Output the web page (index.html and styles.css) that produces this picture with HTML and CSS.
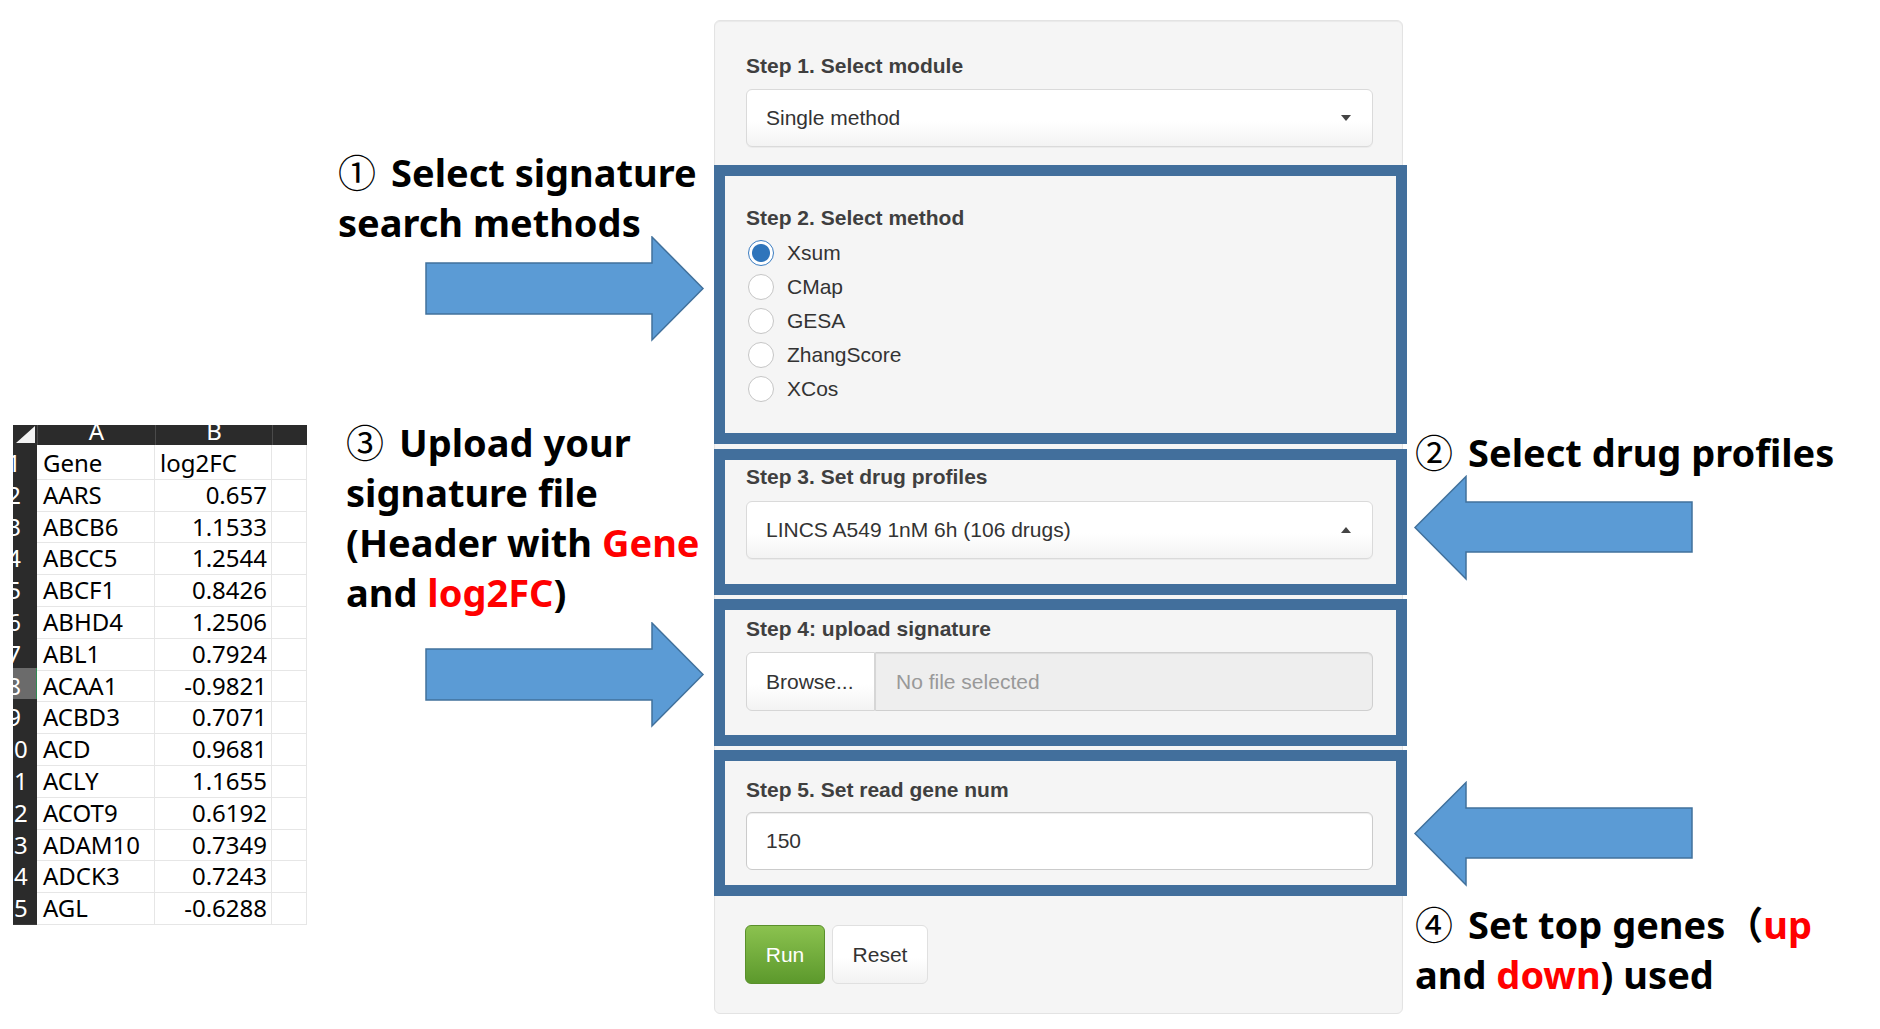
FILE: index.html
```html
<!DOCTYPE html>
<html>
<head>
<meta charset="utf-8">
<title>Signature search workflow</title>
<link rel="stylesheet" href="styles.css">
</head>
<body>
<div class="figure">
  <div class="sheet">
    <div class="sh-head">
      <div class="corner"><span class="tri"></span></div>
      <div class="colh">A</div>
      <div class="colh">B</div>
      <div class="colh"></div>
    </div>
    <div class="row"><div class="rn"><span>1</span></div><div class="c ga">Gene</div><div class="c gb lft">log2FC</div><div class="c gx"></div></div>
    <div class="row"><div class="rn"><span>2</span></div><div class="c ga">AARS</div><div class="c gb">0.657</div><div class="c gx"></div></div>
    <div class="row"><div class="rn"><span>3</span></div><div class="c ga">ABCB6</div><div class="c gb">1.1533</div><div class="c gx"></div></div>
    <div class="row"><div class="rn"><span>4</span></div><div class="c ga">ABCC5</div><div class="c gb">1.2544</div><div class="c gx"></div></div>
    <div class="row"><div class="rn"><span>5</span></div><div class="c ga">ABCF1</div><div class="c gb">0.8426</div><div class="c gx"></div></div>
    <div class="row"><div class="rn"><span>6</span></div><div class="c ga">ABHD4</div><div class="c gb">1.2506</div><div class="c gx"></div></div>
    <div class="row"><div class="rn"><span>7</span></div><div class="c ga">ABL1</div><div class="c gb">0.7924</div><div class="c gx"></div></div>
    <div class="row"><div class="rn sel"><span>8</span></div><div class="c ga">ACAA1</div><div class="c gb">-0.9821</div><div class="c gx"></div></div>
    <div class="row"><div class="rn"><span>9</span></div><div class="c ga">ACBD3</div><div class="c gb">0.7071</div><div class="c gx"></div></div>
    <div class="row"><div class="rn"><span>10</span></div><div class="c ga">ACD</div><div class="c gb">0.9681</div><div class="c gx"></div></div>
    <div class="row"><div class="rn"><span>11</span></div><div class="c ga">ACLY</div><div class="c gb">1.1655</div><div class="c gx"></div></div>
    <div class="row"><div class="rn"><span>12</span></div><div class="c ga">ACOT9</div><div class="c gb">0.6192</div><div class="c gx"></div></div>
    <div class="row"><div class="rn"><span>13</span></div><div class="c ga">ADAM10</div><div class="c gb">0.7349</div><div class="c gx"></div></div>
    <div class="row"><div class="rn"><span>14</span></div><div class="c ga">ADCK3</div><div class="c gb">0.7243</div><div class="c gx"></div></div>
    <div class="row"><div class="rn"><span>15</span></div><div class="c ga">AGL</div><div class="c gb">-0.6288</div><div class="c gx"></div></div>
  </div>

  <div class="notes-left">
    <p class="note n1"><span class="circ">①</span>Select signature<br>search methods</p>
    <svg class="arrow ar1" viewBox="0 0 280 106" width="280" height="106"><path d="M1 27H227V1L278 52.5L227 104V78H1Z"/></svg>
    <p class="note n3"><span class="circ">③</span>Upload your<br>signature file<br>(Header with <span class="red">Gene</span><br>and <span class="red">log2FC</span>)</p>
    <svg class="arrow ar2" viewBox="0 0 280 106" width="280" height="106"><path d="M1 27H227V1L278 52.5L227 104V78H1Z"/></svg>
  </div>

  <div class="panel">
    <div class="sec1">
      <div class="lbl">Step 1. Select module</div>
      <div class="select"><span>Single method</span><i class="caret down"></i></div>
    </div>

    <div class="box b2">
      <div class="lbl">Step 2. Select method</div>
      <div class="radios">
        <div class="radio"><span class="dot on"></span><span>Xsum</span></div>
        <div class="radio"><span class="dot"></span><span>CMap</span></div>
        <div class="radio"><span class="dot"></span><span>GESA</span></div>
        <div class="radio"><span class="dot"></span><span>ZhangScore</span></div>
        <div class="radio"><span class="dot"></span><span>XCos</span></div>
      </div>
    </div>

    <div class="box b3">
      <div class="lbl">Step 3. Set drug profiles</div>
      <div class="select s3"><span>LINCS A549 1nM 6h (106 drugs)</span><i class="caret up"></i></div>
    </div>

    <div class="box b4">
      <div class="lbl">Step 4: upload signature</div>
      <div class="file"><span class="browse">Browse...</span><span class="fname">No file selected</span></div>
    </div>

    <div class="box b5">
      <div class="lbl">Step 5. Set read gene num</div>
      <div class="num">150</div>
    </div>

    <div class="btns">
      <span class="btn run">Run</span>
      <span class="btn reset">Reset</span>
    </div>
  </div>

  <div class="notes-right">
    <p class="note n2"><span class="circ">②</span>Select drug profiles</p>
    <svg class="arrow ar3" viewBox="0 0 281 106" width="281" height="106"><path d="M2 52.5L53 1.5V27H279V77H53V104Z"/></svg>
    <svg class="arrow ar4" viewBox="0 0 281 106" width="281" height="106"><path d="M2 52.5L53 1.5V27H279V77H53V104Z"/></svg>
    <p class="note n4"><span class="circ">④</span>Set top genes<span class="cjk">（</span><span class="red">up</span><br>and <span class="red">down</span>) used</p>
  </div>
</div>
</body>
</html>
```

FILE: styles.css
```css
html, body {
  margin: 0;
  padding: 0;
  background: #ffffff;
}

.figure {
  display: flex;
  align-items: flex-start;
  padding-left: 13px;
  width: 1880px;
  height: 1029px;
  box-sizing: border-box;
  overflow: hidden;
}

/* ---------- spreadsheet ---------- */
.sheet {
  flex: none;
  width: 294px;
  margin-top: 425px;
  font-family: "Noto Sans", "Liberation Sans", sans-serif;
  font-size: 24px;
  color: #000;
}

.sh-head {
  display: grid;
  grid-template-columns: 24px 118px 117px 35px;
  height: 20px;
  background: #2b2b2b;
  color: #fff;
  overflow: hidden;
}

.corner {
  display: flex;
  align-items: flex-end;
  justify-content: flex-end;
  padding: 0 2px 2px 0;
  box-sizing: border-box;
}

.tri {
  width: 19px;
  height: 17px;
  background: #f2f2f2;
  clip-path: polygon(100% 0, 100% 100%, 0 100%);
}

.colh {
  text-align: center;
  line-height: 12px;
  height: 20px;
  border-left: 1px solid #4a4a4a;
  box-sizing: border-box;
}

.row {
  display: grid;
  grid-template-columns: 24px 118px 117px 35px;
  height: 31.8px;
  line-height: 31.8px;
}

.rn {
  background: #2b2b2b;
  color: #fff;
  overflow: hidden;
  border-bottom: 1px solid #3a3a3a;
  box-sizing: border-box;
  padding-top: 2px;
}

.rn span {
  display: block;
  width: 40px;
  margin-left: -19px;
  text-align: center;
}

.rn.sel {
  background: #6b6b6b;
  border-right: 1px solid #2f8a52;
}

.c {
  border-right: 1px solid #e6e6e6;
  border-bottom: 1px solid #e6e6e6;
  box-sizing: border-box;
  white-space: nowrap;
  padding-top: 2px;
}

.ga {
  padding-left: 6px;
}

.gb {
  text-align: right;
  padding-right: 4px;
}

.gb.lft {
  text-align: left;
  padding-left: 5px;
}

/* ---------- annotations ---------- */
.note {
  margin: 0;
  font-family: "Noto Sans", "Noto Sans CJK SC", sans-serif;
  font-weight: 700;
  font-size: 38px;
  line-height: 50px;
  color: #000;
  white-space: nowrap;
}

.circ {
  font-family: "Noto Sans CJK SC", "DejaVu Sans", sans-serif;
  font-weight: 400;
  line-height: 0;
  margin-right: 15px;
}

.cjk {
  font-family: "Noto Sans CJK SC", sans-serif;
  font-weight: 700;
  line-height: 0;
}

.red {
  color: #ff0000;
}

.arrow {
  display: block;
}

.arrow path {
  fill: #5b9bd5;
  stroke: #41719c;
  stroke-width: 1.5;
}

.notes-left {
  flex: none;
  width: 376px;
  margin-left: 31px;
}

.n1 {
  margin-top: 147px;
}

.ar1 {
  margin: -11px 0 0 87px;
}

.n3 {
  margin: 75px 0 0 8px;
}

.ar2 {
  margin: 5px 0 0 87px;
}

.notes-right {
  flex: none;
  margin-left: 12px;
}

.n2 {
  margin-top: 427px;
}

.ar3 {
  margin: -2px 0 0 -2px;
}

.ar4 {
  margin: 200px 0 0 -2px;
}

.n4 {
  margin-top: 12px;
}

/* ---------- shiny panel ---------- */
.panel {
  flex: none;
  width: 689px;
  height: 994px;
  margin-top: 20px;
  box-sizing: border-box;
  padding-top: 30px;
  background: #f5f5f5;
  border: 1px solid #e3e3e3;
  border-radius: 6px;
  box-shadow: inset 0 1px 1px rgba(0, 0, 0, 0.05);
  font-family: "Liberation Sans", Arial, sans-serif;
  font-size: 21px;
  color: #333;
}

.lbl {
  font-weight: 700;
  font-size: 21px;
  line-height: 30px;
  color: #3f3f3f;
}

.sec1 {
  padding: 0 29px 0 31px;
}

.select {
  display: flex;
  align-items: center;
  height: 58px;
  margin-top: 8px;
  padding-left: 19px;
  box-sizing: border-box;
  background: linear-gradient(to bottom, #ffffff 0%, #ffffff 55%, #f3f3f3 100%);
  border: 1px solid #dadada;
  border-radius: 6px;
  box-shadow: 0 1px 0 rgba(0, 0, 0, 0.04);
  color: #333;
}

.s3 {
  margin-top: 9px;
}

.caret {
  margin-left: auto;
  margin-right: 21px;
  width: 0;
  height: 0;
  border-left: 5px solid transparent;
  border-right: 5px solid transparent;
}

.caret.down {
  border-top: 6px solid #444;
}

.caret.up {
  border-bottom: 6px solid #444;
}

.box {
  border: 11px solid #426f9c;
  margin: 0 -5px 0 -1px;
  padding-left: 21px;
  padding-right: 23px;
}

.b2 {
  margin-top: 18px;
  padding-top: 27px;
  padding-bottom: 27px;
}

.b3 {
  margin-top: 5px;
  padding-top: 2px;
  padding-bottom: 25px;
}

.b4 {
  margin-top: 4px;
  padding-top: 4px;
  padding-bottom: 24px;
}

.b5 {
  margin-top: 4px;
  padding-top: 14px;
  padding-bottom: 15px;
}

.radios {
  margin-top: 3px;
}

.radio {
  display: flex;
  align-items: center;
  height: 34px;
  line-height: 30px;
  color: #333;
}

.dot {
  flex: none;
  width: 26px;
  height: 26px;
  box-sizing: border-box;
  margin: 0 13px 0 2px;
  border-radius: 50%;
  border: 1.5px solid #c6c6c6;
  background: #fff;
}

.dot.on {
  border: 1.5px solid #3b7dc2;
  background: radial-gradient(circle, #2f75bb 0, #2f75bb 8.5px, #ffffff 9.5px);
}

.file {
  display: flex;
  height: 59px;
  margin-top: 8px;
}

.browse {
  display: flex;
  align-items: center;
  width: 129px;
  box-sizing: border-box;
  padding-left: 19px;
  background: linear-gradient(to bottom, #ffffff 0%, #ffffff 55%, #f3f3f3 100%);
  border: 1px solid #d6d6d6;
  border-radius: 6px 0 0 6px;
  color: #333;
}

.fname {
  flex: 1;
  display: flex;
  align-items: center;
  padding-left: 20px;
  background: #eeeeee;
  border: 1px solid #cfcfcf;
  border-left: 1px solid #d6d6d6;
  border-radius: 0 6px 6px 0;
  box-shadow: inset 0 1px 1px rgba(0, 0, 0, 0.075);
  color: #999;
}

.num {
  display: flex;
  align-items: center;
  height: 58px;
  margin-top: 7px;
  padding-left: 19px;
  box-sizing: border-box;
  background: #fff;
  border: 1.5px solid #cbcbcb;
  border-radius: 6px;
  box-shadow: inset 0 1px 1px rgba(0, 0, 0, 0.075);
  color: #333;
}

.btns {
  display: flex;
  margin-top: 29px;
  padding-left: 30px;
}

.btn {
  display: flex;
  align-items: center;
  justify-content: center;
  height: 59px;
  box-sizing: border-box;
  border-radius: 6px;
}

.run {
  width: 80px;
  color: #fff;
  background: linear-gradient(to bottom, #8bc24f 0%, #5c992c 100%);
  border: 1px solid #5a902b;
}

.reset {
  width: 96px;
  margin-left: 7px;
  color: #333;
  background: linear-gradient(to bottom, #ffffff 0%, #ffffff 55%, #f2f2f2 100%);
  border: 1px solid #e0e0e0;
}
```
